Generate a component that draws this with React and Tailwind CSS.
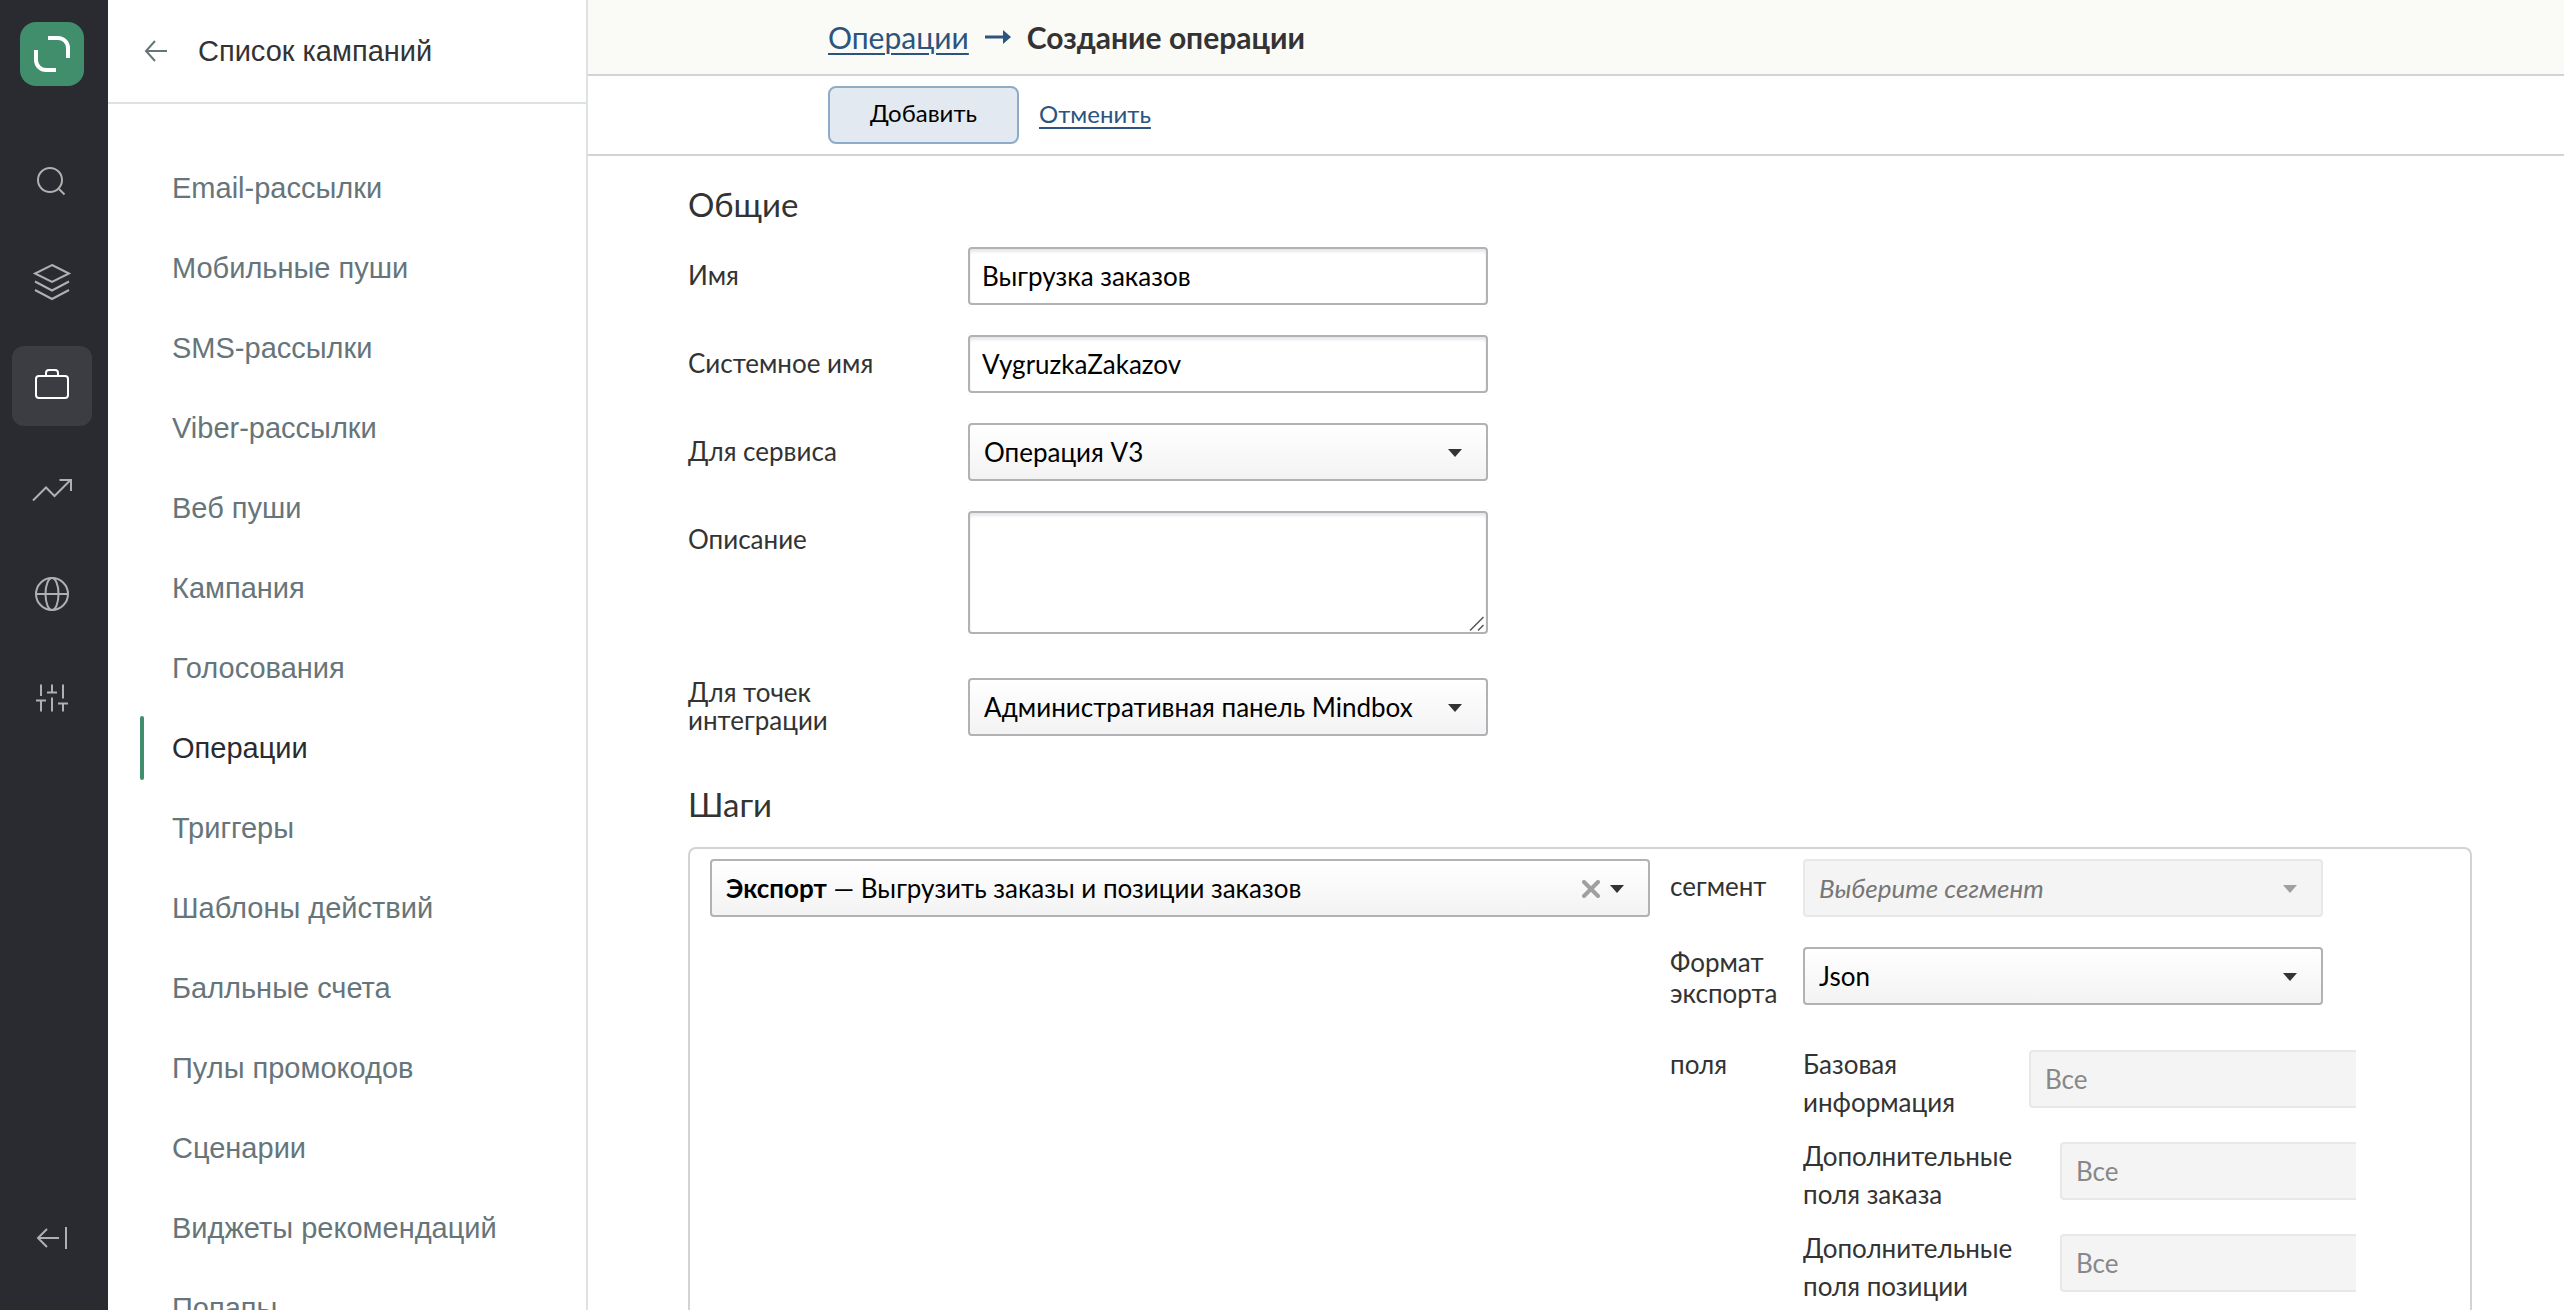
const menuItems = [
  'Email-рассылки',
  'Мобильные пуши',
  'SMS-рассылки',
  'Viber-рассылки',
  'Веб пуши',
  'Кампания',
  'Голосования',
  'Операции',
  'Триггеры',
  'Шаблоны действий',
  'Балльные счета',
  'Пулы промокодов',
  'Сценарии',
  'Виджеты рекомендаций',
  'Попапы',
];

const railItems = [
  {
    label: 'Поиск',
    icon: (
      <>
        <circle cx="18" cy="22" r="12" />
        <path d="M27 31l5.5 5.5" />
      </>
    ),
  },
  {
    label: 'Данные',
    icon: (
      <path d="M20 3l17 8.5L20 20 3 11.5zM3 19.5l17 9 17-9M3 28l17 9 17-9" />
    ),
  },
  {
    label: 'Кампании',
    active: true,
    icon: (
      <>
        <rect x="4" y="10" width="32" height="22" rx="3" />
        <path d="M14 10V7a3 3 0 0 1 3-3h6a3 3 0 0 1 3 3v3" />
      </>
    ),
  },
  {
    label: 'Отчёты',
    icon: <path d="M1 30.5l13-13 8.5 8.5L38.5 10M27.5 10H39v11" />,
  },
  {
    label: 'Интеграции',
    icon: (
      <>
        <circle cx="20" cy="20" r="16" />
        <ellipse cx="20" cy="20" rx="6.5" ry="16" />
        <path d="M4 20h32" />
      </>
    ),
  },
  {
    label: 'Настройки',
    icon: (
      <path d="M9 6.5V18M4 22.5h10M9 22.5v11M20 6.5v8M15 14.5h10M20 19.5v14M31 6.5v14M26 25.5h10M31 25.5v8" />
    ),
  },
];

function RailIcon({ children }) {
  return (
    <svg className="size-10" viewBox="0 0 40 40" fill="none" stroke="currentColor" strokeWidth="2" aria-hidden="true">
      {children}
    </svg>
  );
}

/* Треугольник справа внутри выпадающего списка */
function Caret({ className = 'text-[#333]' }) {
  return (
    <svg
      className={`pointer-events-none absolute right-[26px] top-[26px] h-2 w-3.5 ${className}`}
      viewBox="0 0 14 8"
      fill="currentColor"
      aria-hidden="true"
    >
      <path d="M0 0h14L7 8z" />
    </svg>
  );
}

function Select({ id, value, disabled }) {
  return (
    <div className="relative w-[520px]">
      <select
        id={id}
        disabled={disabled}
        className="h-[58px] w-full appearance-none rounded border-2 border-[#b1b1b6] bg-linear-to-b from-white to-[#f3f3f3] pl-3.5 text-black disabled:border-[#e8e8e8] disabled:from-[#f4f4f4] disabled:to-[#f4f4f4] disabled:italic disabled:text-[#777] disabled:opacity-100"
      >
        <option>{value}</option>
      </select>
      <Caret className={disabled ? 'text-[#a0a0a0]' : 'text-[#333]'} />
    </div>
  );
}

function TextInput({ id, value }) {
  return (
    <input
      id={id}
      type="text"
      defaultValue={value}
      className="h-[58px] w-[520px] rounded border-2 border-[#b1b1b6] bg-white px-3 text-black shadow-[inset_0_3px_3px_#e8e8ea]"
    />
  );
}

function FieldRow({ id, label, children }) {
  return (
    <div className="flex">
      <label htmlFor={id} className="w-[280px] shrink-0 pt-3.5 leading-7">
        {label}
      </label>
      {children}
    </div>
  );
}

function ExportField({ id, first, second, wide }) {
  return (
    <div className="flex">
      <label htmlFor={id} className={`shrink-0 leading-[38px] ${wide ? 'w-[257px]' : 'w-[226px]'}`}>
        {first}
        <br />
        {second}
      </label>
      <input
        id={id}
        type="text"
        disabled
        placeholder="Все"
        className="mt-[5px] h-[58px] w-[520px] shrink-0 rounded border-2 border-[#e8e8e8] bg-[#f4f4f4] px-3.5 placeholder:text-[#888]"
      />
    </div>
  );
}

function Rail() {
  return (
    <nav className="flex w-[108px] shrink-0 flex-col bg-[#2a2b30] pl-3 text-[#b0b0b2]">
      <a href="#" aria-label="Mindbox" className="ml-2 mt-[22px]">
        <svg className="size-16" viewBox="0 0 64 64" fill="none" aria-hidden="true">
          <rect width="64" height="64" rx="16" fill="#418e6d" />
          <path
            d="M28 16h10a10 10 0 0 1 10 10v10M16 28v10a10 10 0 0 0 10 10h10"
            stroke="#fff"
            strokeWidth="4"
          />
        </svg>
      </a>
      <div className="mt-[52px] flex flex-col gap-6">
        {railItems.map(({ label, icon, active }) => (
          <button
            key={label}
            aria-label={label}
            className={`flex size-20 items-center justify-center rounded-xl ${active ? 'bg-[#3b3d42] text-white' : ''}`}
          >
            <RailIcon>{icon}</RailIcon>
          </button>
        ))}
      </div>
      <button aria-label="Свернуть меню" className="mb-8 mt-auto flex size-20 items-center justify-center">
        <RailIcon>
          <path d="M27 20H5.500M15 11l-9 9 9 9M34 9v22" />
        </RailIcon>
      </button>
    </nav>
  );
}

function Menu() {
  return (
    <aside className='flex w-[480px] shrink-0 flex-col overflow-hidden border-r-2 border-[#dde2e5] bg-white font-["Liberation_Sans",sans-serif] text-[29px] leading-10'>
      <div className="flex h-[104px] shrink-0 items-center gap-7 border-b-2 border-[#dde2e5] pl-9 text-[#333]">
        <button aria-label="Назад" className="text-[#66757a]">
          <svg className="h-6 w-[26px]" viewBox="0 0 26 24" fill="none" stroke="currentColor" strokeWidth="2" aria-hidden="true">
            <path d="M23 12H2M11 2L2 12l9 10" />
          </svg>
        </button>
        <span>Список кампаний</span>
      </div>
      <ul className="flex flex-col gap-4 pl-8 pt-[52px]">
        {menuItems.map((item) => {
          const active = item === 'Операции';
          return (
            <li key={item} className="flex h-16 items-center gap-7">
              <span className={`h-16 w-1 rounded-full ${active ? 'bg-[#418e6d]' : ''}`} />
              <a href="#" className={active ? 'text-[#2a2b30]' : 'text-[#66757a]'}>
                {item}
              </a>
            </li>
          );
        })}
      </ul>
    </aside>
  );
}

export default function App() {
  return (
    <div className='flex h-screen overflow-hidden bg-white font-["Lato",sans-serif] text-[26px] text-[#333]'>
      <Rail />
      <Menu />

      <main className="flex min-w-0 flex-1 flex-col">
        {/* Хлебные крошки */}
        <header className="flex h-[76px] shrink-0 items-center gap-4 border-b-2 border-[#d3d3d3] bg-[#fafbf6] pl-60 text-[30px]">
          <a href="#" className="text-[#2b547e] underline decoration-2 underline-offset-4">
            Операции
          </a>
          <svg className="h-4 w-[26px] text-[#2b547e]" viewBox="0 0 26 16" aria-hidden="true">
            <path d="M0 8h20" stroke="currentColor" strokeWidth="3" />
            <path d="M18 1l8 7-8 7z" fill="currentColor" />
          </svg>
          <h1 className="font-bold">Создание операции</h1>
        </header>

        {/* Действия */}
        <div className="flex h-20 shrink-0 items-center gap-5 border-b-2 border-[#d3d3d3] pl-60 text-2xl">
          <button className="h-[58px] w-[191px] rounded-lg border-2 border-[#8facc6] bg-[#e2e9f0] pb-1 text-black">
            Добавить
          </button>
          <a href="#" className="pb-0.5 text-[#2b547e] underline decoration-2 underline-offset-4">
            Отменить
          </a>
        </div>

        <form className="flex min-h-0 flex-1 flex-col pl-[100px] pr-[92px] pt-7">
          <h2 className="mb-[23px] text-[33px] leading-10">Общие</h2>

          <div className="flex flex-col gap-[30px]">
            <FieldRow id="name" label="Имя">
              <TextInput id="name" value="Выгрузка заказов" />
            </FieldRow>
            <FieldRow id="system-name" label="Системное имя">
              <TextInput id="system-name" value="VygruzkaZakazov" />
            </FieldRow>
            <FieldRow id="service" label="Для сервиса">
              <Select id="service" value="Операция V3" />
            </FieldRow>
            <FieldRow id="description" label="Описание">
              <div className="relative w-[520px]">
                <textarea
                  id="description"
                  className="block h-[123px] w-full resize-none rounded border-2 border-[#b1b1b6] bg-white px-3 py-2 shadow-[inset_0_3px_3px_#e8e8ea]"
                />
                <svg
                  className="pointer-events-none absolute bottom-[3px] right-1 size-[15px]"
                  viewBox="0 0 15 15"
                  stroke="#555"
                  strokeWidth="1.5"
                  aria-hidden="true"
                >
                  <path d="M1 14.500L14.500 1M9 14.500l5.500-5.500" />
                </svg>
              </div>
            </FieldRow>
          </div>

          <div className="mt-11 flex">
            <label htmlFor="points" className="w-[280px] shrink-0 leading-7">
              Для точек
              <br />
              интеграции
            </label>
            <Select id="points" value="Административная панель Mindbox" />
          </div>

          <h2 className="mb-[23px] mt-12 text-[33px] leading-10">Шаги</h2>

          <section className="flex min-h-0 flex-1 gap-5 rounded-t-lg border-2 border-b-0 border-[#d3d3d3] pl-5 pr-[114px] pt-2.5">
            <div className="relative h-[58px] min-w-0 flex-1">
              <button
                type="button"
                aria-haspopup="listbox"
                className="h-full w-full rounded border-2 border-[#b1b1b6] bg-linear-to-b from-white to-[#f3f3f3] pl-3.5 text-left text-black"
              >
                <b>Экспорт</b> — Выгрузить заказы и позиции заказов
              </button>
              <button type="button" aria-label="Очистить" className="absolute right-[50px] top-[21px] text-[#a0a0a0]">
                <svg className="size-[18px]" viewBox="0 0 18 18" stroke="currentColor" strokeWidth="4" strokeLinecap="round" aria-hidden="true">
                  <path d="M2 2l14 14M16 2L2 16" />
                </svg>
              </button>
              <Caret />
            </div>

            <div className="flex w-[686px] shrink-0 flex-col leading-[31px]">
              <div className="mb-[30px] flex">
                <label htmlFor="segment" className="w-[133px] shrink-0 pt-3">
                  сегмент
                </label>
                <Select id="segment" value="Выберите сегмент" disabled />
              </div>
              <div className="mb-9 flex">
                <label htmlFor="format" className="w-[133px] shrink-0">
                  Формат
                  <br />
                  экспорта
                </label>
                <Select id="format" value="Json" />
              </div>
              <div className="flex" role="group" aria-labelledby="fields-label">
                <span id="fields-label" className="w-[133px] shrink-0 pt-1">
                  поля
                </span>
                <div className="flex min-w-0 flex-1 flex-col gap-4 overflow-hidden">
                  <ExportField id="base" first="Базовая" second="информация" />
                  <ExportField id="order" first="Дополнительные" second="поля заказа" wide />
                  <ExportField id="line" first="Дополнительные" second="поля позиции" wide />
                </div>
              </div>
            </div>
          </section>
        </form>
      </main>
    </div>
  );
}
